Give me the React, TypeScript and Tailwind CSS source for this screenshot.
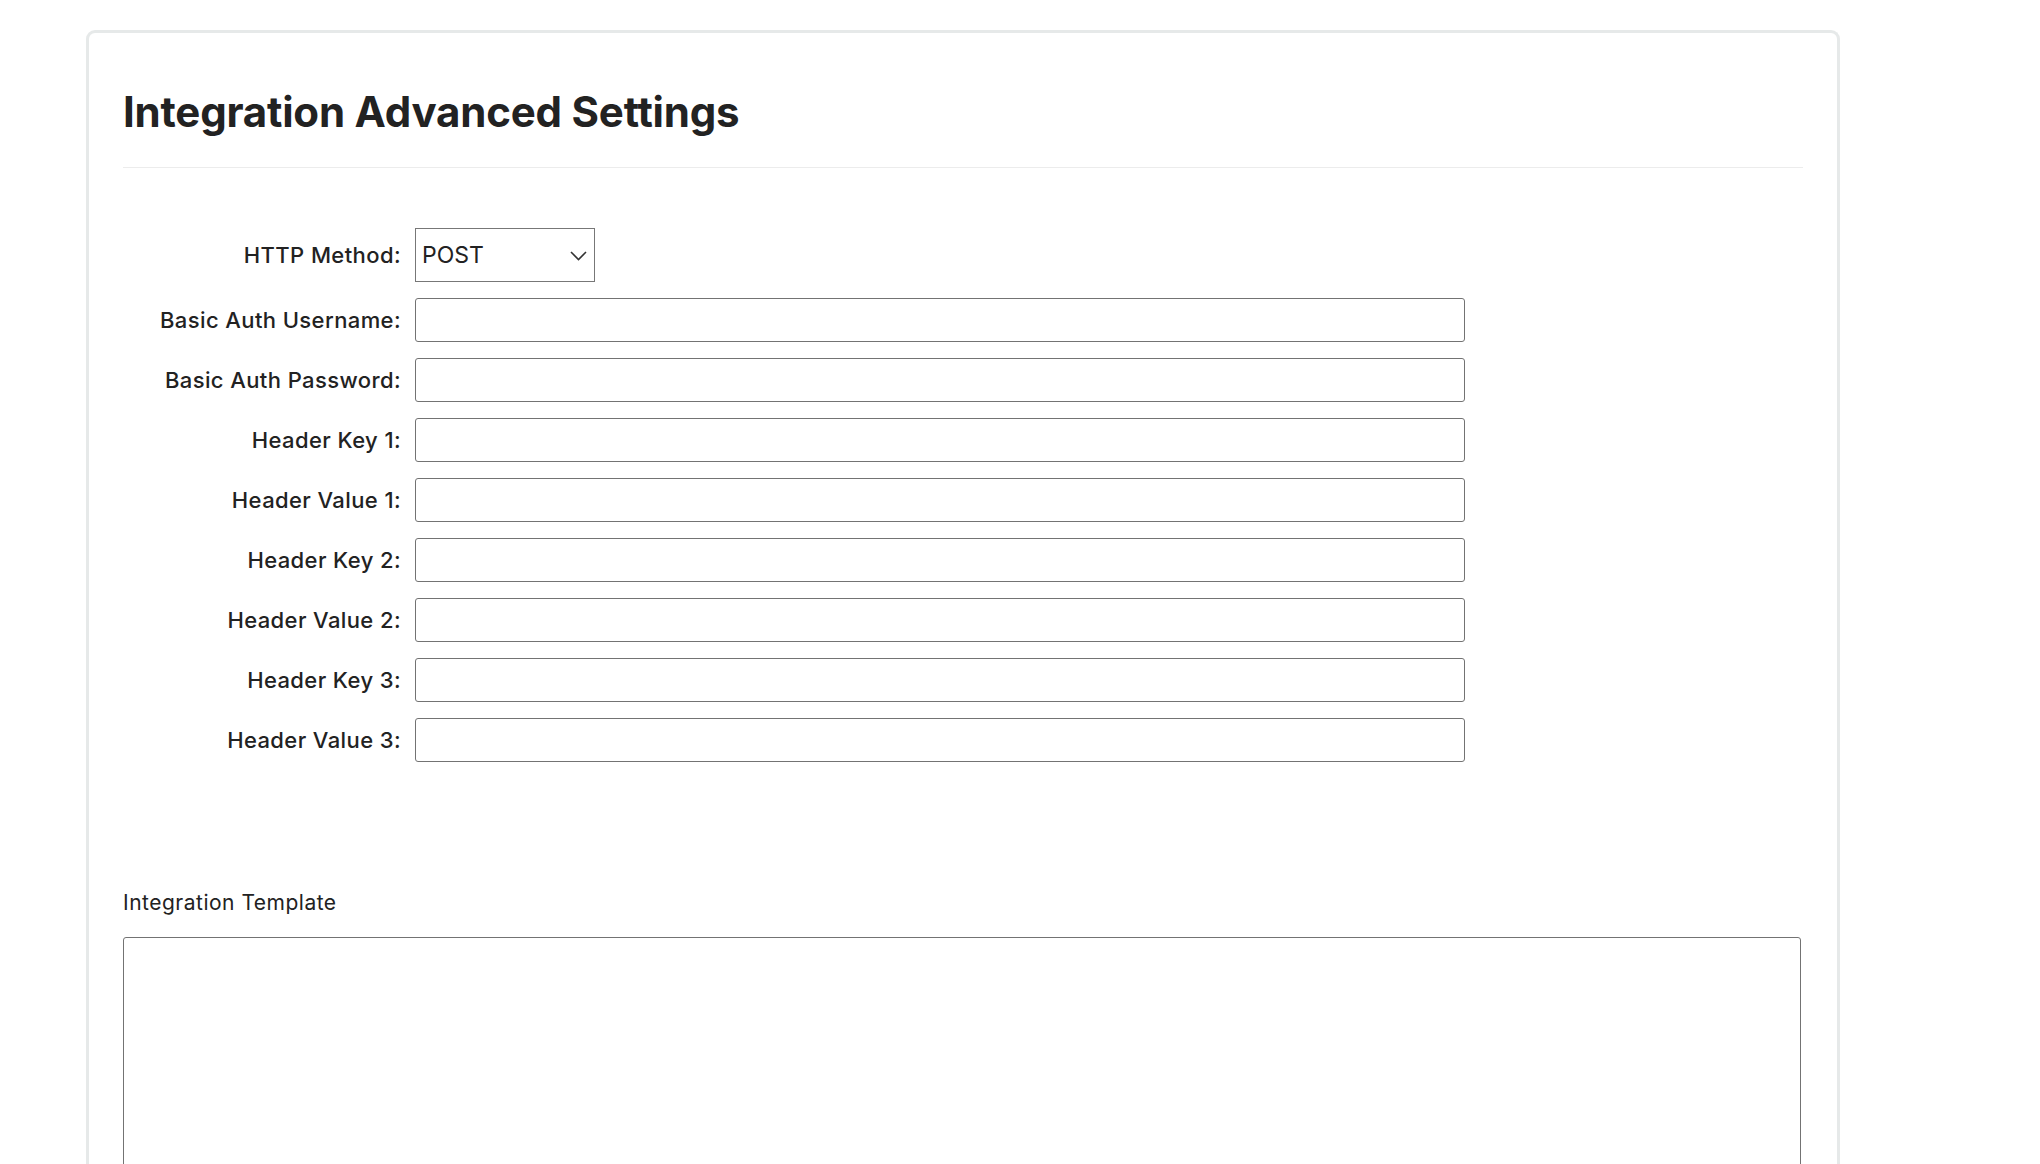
import React from 'react';

const fields = [
  'Basic Auth Username:',
  'Basic Auth Password:',
  'Header Key 1:',
  'Header Value 1:',
  'Header Key 2:',
  'Header Value 2:',
  'Header Key 3:',
  'Header Value 3:',
];

function ChevronDown() {
  return (
    <svg width="17" height="10" viewBox="0 0 17 10" fill="none" className="pointer-events-none absolute right-[8px] top-[23px]">
      <path d="M1 1l7.5 7.5L16 1" stroke="#333" strokeWidth="1.6" />
    </svg>
  );
}

/**
 * Advanced settings card for an outbound integration
 */
export default function App() {
  return (
    <div className="min-h-screen bg-white font-['Inter','Liberation_Sans',sans-serif] text-[#222]">
      <div className="pl-[86px] pt-[30px]">
        <div className="w-[1754px] rounded-t-[9px] border-[3px] border-b-0 border-[#e6e9e9] bg-white px-[34px] pt-[54px]">
          <h1 className="text-[42px] font-bold leading-[50px] tracking-[-0.2px]">Integration Advanced Settings</h1>
          <div className="mt-[30px] h-px bg-[#ececec]" />

          <form className="mt-[60px] grid grid-cols-[278px_1050px] items-center gap-x-[14px] gap-y-4">
            <label className="text-right text-[22px] font-medium tracking-[0.4px]">HTTP Method:</label>
            <div className="relative w-[180px]">
              <select
                defaultValue="POST"
                className="h-[54px] w-full appearance-none border border-[#777] bg-white pl-[6px] text-[23px] outline-none"
              >
                <option>POST</option>
                <option>GET</option>
                <option>PUT</option>
              </select>
              <ChevronDown />
            </div>

            {fields.map((f) => (
              <React.Fragment key={f}>
                <label className="text-right text-[22px] font-medium tracking-[0.4px]">{f}</label>
                <input
                  type={f.includes('Password') ? 'password' : 'text'}
                  className="h-[44px] w-full rounded-[3px] border border-[#737373] bg-white px-2 text-[20px] outline-none"
                />
              </React.Fragment>
            ))}
          </form>

          <div className="mt-[127px] text-[21px] leading-[28px] tracking-[0.5px]">Integration Template</div>
          <textarea className="mt-[20px] block h-[360px] w-[1678px] resize-none rounded-[3px] border border-[#737373] bg-white outline-none" />
        </div>
      </div>
    </div>
  );
}
